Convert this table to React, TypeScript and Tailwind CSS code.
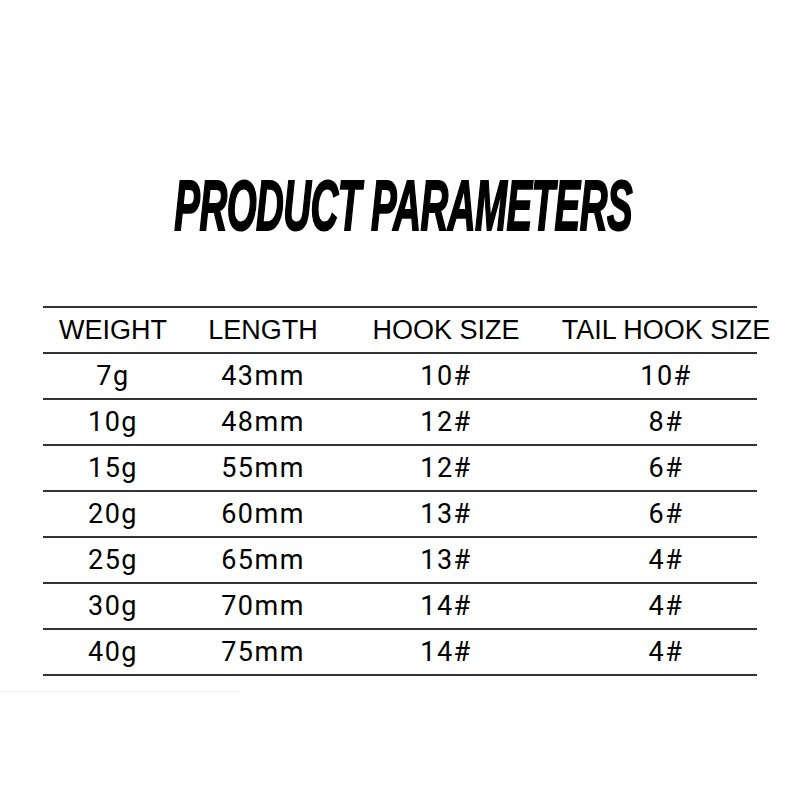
import React from 'react';

const rows = [
  ['7g', '43mm', '10#', '10#'],
  ['10g', '48mm', '12#', '8#'],
  ['15g', '55mm', '12#', '6#'],
  ['20g', '60mm', '13#', '6#'],
  ['25g', '65mm', '13#', '4#'],
  ['30g', '70mm', '14#', '4#'],
  ['40g', '75mm', '14#', '4#'],
];

const headers = ['WEIGHT', 'LENGTH', 'HOOK SIZE', 'TAIL HOOK SIZE'];

const gridCols = 'grid grid-cols-[140px_160px_206px_208px]';

function Cell({ children, last }: { children: React.ReactNode; last?: boolean }) {
  return (
    <div className={`flex items-center justify-center whitespace-nowrap ${last ? 'pl-[26px]' : ''}`}>
      {children}
    </div>
  );
}

export default function App() {
  return (
    <div className="w-[800px] h-[800px] bg-white flex flex-col items-center overflow-hidden">
      {/* Title */}
      <div className="pt-[171px] h-[306px] w-full flex justify-center pl-[6px]">
        <div
          className="inline-block origin-center scale-x-[0.55] text-[70px] leading-none font-bold italic text-black whitespace-nowrap tracking-[-1px] [-webkit-text-stroke:2px_black]"
          style={{ fontFamily: '"Liberation Sans", Arial, sans-serif' }}
        >
          PRODUCT PARAMETERS
        </div>
      </div>

      {/* Table */}
      <div className="w-[714px] border-t-2 border-[#333]">
        <div
          className={`${gridCols} h-[46px] border-b-2 border-[#333] text-[27px] text-black`}
          style={{ fontFamily: '"Liberation Sans", Arial, sans-serif' }}
        >
          {headers.map((h, i) => (
            <Cell key={h} last={i === 3}>
              {h}
            </Cell>
          ))}
        </div>
        {rows.map((r, idx) => (
          <div
            key={idx}
            className={`${gridCols} h-[46px] border-b-2 border-[#333] text-[27px] tracking-[1.5px] text-black`}
            style={{ fontFamily: 'Roboto, sans-serif' }}
          >
            {r.map((c, i) => (
              <Cell key={i} last={i === 3}>
                {c}
              </Cell>
            ))}
          </div>
        ))}
      </div>

      {/* faint scan residue under table */}
      <div className="w-full h-[2px] mt-[15px] flex">
        <div className="w-[240px] h-px bg-[#ececec]" />
      </div>
    </div>
  );
}
